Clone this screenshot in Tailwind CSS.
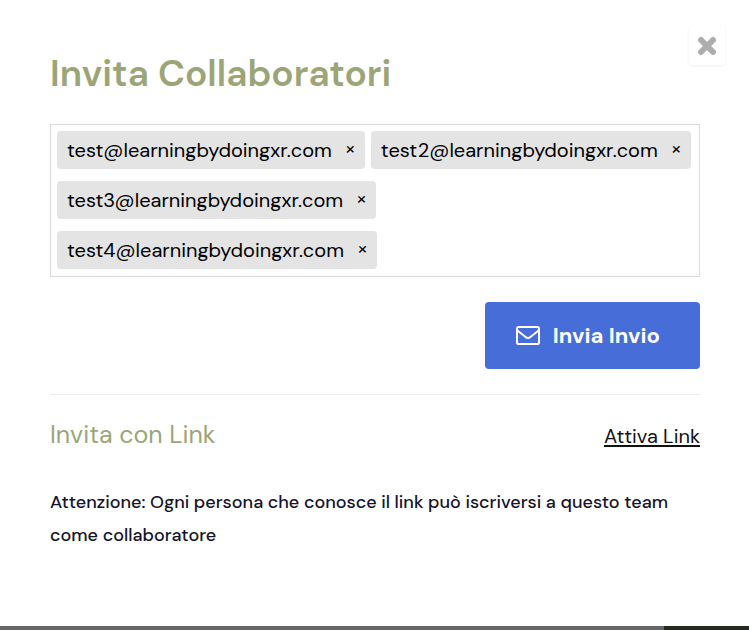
<!DOCTYPE html>
<html lang="it">
<head>
<meta charset="utf-8">
<meta name="viewport" content="width=device-width, initial-scale=1">
<title>Invita Collaboratori</title>
<script src="https://cdn.jsdelivr.net/npm/@tailwindcss/browser@4"></script>
</head>
<body class="min-h-screen flex flex-col bg-white font-['DM_Sans','Roboto',sans-serif] text-black">
<main class="relative grow pl-[50px] pr-[49px] pt-12 pb-10">
  <button type="button" aria-label="Chiudi" class="absolute right-6 top-[26px] flex h-[39px] w-9 items-center justify-center rounded bg-white shadow-[0_1px_3px_rgba(0,0,0,0.07)]">
    <svg class="size-5" viewBox="0 0 20 20" fill="none" stroke="#adadad" stroke-width="6" stroke-linecap="round" aria-hidden="true"><path d="M4 4L16 16M16 4L4 16"/></svg>
  </button>
  <h1 class="text-[37px] leading-[50px] font-semibold text-[#9ba577]">Invita Collaboratori</h1>

  <ul class="mt-[26px] flex flex-wrap gap-x-1.5 gap-y-3 border border-[#dcdcdc] px-1.5 pt-1.5 pb-[7px] text-[20px]">
    <li class="flex h-[38px] items-center rounded bg-[#e4e4e4] pl-2.5 pr-[9px]">test@learningbydoingxr.com<button type="button" aria-label="Rimuovi test@learningbydoingxr.com" class="ml-[13px] pb-1 text-[20px] leading-6">×</button></li>
    <li class="flex h-[38px] items-center rounded bg-[#e4e4e4] pl-2.5 pr-[9px]">test2@learningbydoingxr.com<button type="button" aria-label="Rimuovi test2@learningbydoingxr.com" class="ml-[13px] pb-1 text-[20px] leading-6">×</button></li>
    <li class="flex h-[38px] items-center rounded bg-[#e4e4e4] pl-2.5 pr-[9px]">test3@learningbydoingxr.com<button type="button" aria-label="Rimuovi test3@learningbydoingxr.com" class="ml-[13px] pb-1 text-[20px] leading-6">×</button></li>
    <li class="flex h-[38px] items-center rounded bg-[#e4e4e4] pl-2.5 pr-[9px]">test4@learningbydoingxr.com<button type="button" aria-label="Rimuovi test4@learningbydoingxr.com" class="ml-[13px] pb-1 text-[20px] leading-6">×</button></li>
  </ul>

  <div class="mt-[25px] flex justify-end border-b border-[#ececec] pb-[25px]">
    <button type="button" class="flex h-[67px] items-center gap-3 rounded bg-[#466dd8] pl-[30px] pr-10 text-[22px] font-bold text-white">
      <svg class="h-5 w-[26px]" viewBox="0 0 26 20" fill="none" stroke="#fff" stroke-width="2" stroke-linejoin="round" aria-hidden="true"><rect x="2" y="1" width="22" height="17" rx="1.5"/><path d="M2.5 4.500C6 7.500 8 9 10.500 11Q13 13 15.500 11C18 9 20 7.500 23.500 4.500"/></svg>
      Invia Invio
    </button>
  </div>

  <div class="mt-6 flex items-center justify-between">
    <h2 class="text-[25px] leading-8 text-[#9ba577]">Invita con Link</h2>
    <a href="#" class="pt-0.5 text-[20px] leading-7 underline decoration-2 underline-offset-2 text-[#111]">Attiva Link</a>
  </div>
  <p class="mt-[35px] text-[18px] leading-[33px] font-medium text-[#14142b]">Attenzione: Ogni persona che conosce il link può iscriversi a questo team come collaboratore</p>
</main>
<div class="flex h-1 bg-[#666]"><div class="ml-auto w-[85px] bg-[#262a1c]"></div></div>
</body>
</html>
